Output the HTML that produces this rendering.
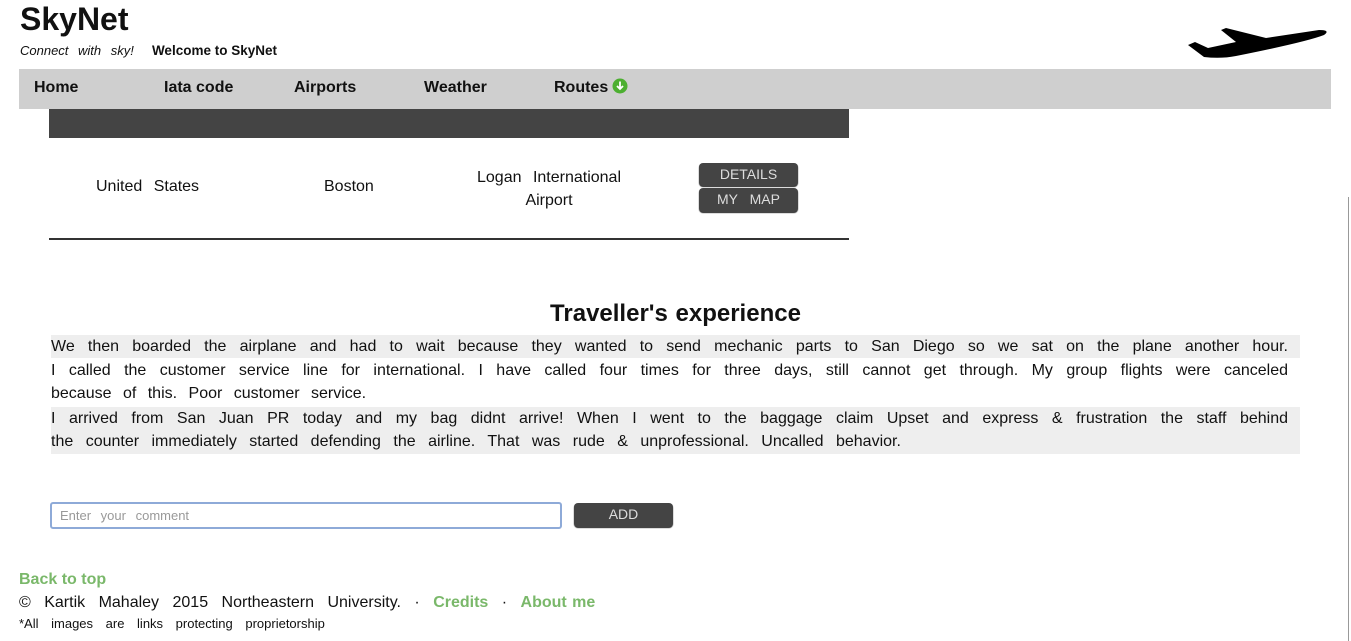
<!DOCTYPE html>
<html><head><meta charset="utf-8"><style>
body{margin:0;width:1351px;height:641px;overflow:hidden;background:#fff;font-family:"Liberation Sans",Arial,sans-serif;color:#111;position:relative}
.a{position:absolute}
.nav span{position:absolute;top:10px;font-weight:bold;font-size:16px;color:#111}
.btn{position:absolute;background:#444;color:#ddd;border-radius:4px;font-size:14px;text-align:center;box-shadow:0 1px 1px #222}
.p{position:absolute;left:51px;width:1237px;padding-right:12px;font-size:16px;line-height:23px;text-align:justify;text-align-last:justify;word-spacing:7px}
.g{background:#eee}
</style></head><body>
<div class="a" style="left:20px;top:0;font-size:32px;font-weight:bold;line-height:38px">SkyNet</div>
<div class="a" style="left:20px;top:43px;font-size:13px"><i style="word-spacing:6px">Connect with sky!</i>&nbsp;&nbsp;&nbsp;&nbsp; <b style="font-size:13.5px">Welcome to SkyNet</b></div>
<svg class="a" style="left:1186px;top:26px" width="144" height="34" viewBox="0 0 144 34"><path d="M2 19 L9 16 L22 22 L50 16 L35 4 L40 2 L80 12 L133 4 Q145 4 138 9 Q120 16 50 30 Q35 33 18 31 L14 28 Z" fill="#000"/></svg>
<div class="a nav" style="left:19px;top:69px;width:1312px;height:40px;background:#cfcfcf">
<span style="left:15px">Home</span><span style="left:145px">Iata code</span><span style="left:275px">Airports</span><span style="left:405px">Weather</span><span style="left:535px">Routes</span>
<svg class="a" style="left:593px;top:9px" width="16" height="16" viewBox="0 0 16 16"><circle cx="8" cy="8" r="7.5" fill="#4caf30"/><path d="M8 3.5V11M5 8l3 3 3-3" stroke="#fff" stroke-width="1.8" fill="none"/></svg>
</div>
<div class="a" style="left:49px;top:109px;width:800px;height:29px;background:#444"></div>
<div class="a" style="left:96px;top:178px;font-size:16px;word-spacing:7px">United States</div>
<div class="a" style="left:324px;top:178px;font-size:16px">Boston</div>
<div class="a" style="left:450px;top:166px;width:198px;font-size:16px;line-height:23px;text-align:center;word-spacing:7px">Logan International Airport</div>
<div class="btn" style="left:699px;top:163px;width:99px;height:23px;line-height:22px">DETAILS</div>
<div class="btn" style="left:699px;top:188px;width:99px;height:24px;line-height:23px;word-spacing:8px">MY MAP</div>
<div class="a" style="left:49px;top:238px;width:800px;height:2px;background:#333"></div>
<div class="a" style="left:0;width:1351px;top:300px;text-align:center;font-size:24px;font-weight:bold;word-spacing:1px">Traveller's experience</div>
<div class="p g" style="top:335px">We then boarded the airplane and had to wait because they wanted to send mechanic parts to San Diego so we sat on the plane another hour.</div>
<div class="p" style="top:359px;text-align-last:left">I called the customer service line for international. I have called four times for three days, still cannot get through. My group flights were canceled because of this. Poor customer service.</div>
<div class="p g" style="top:407px;text-align-last:left;height:47px;word-spacing:8px">I arrived from San Juan PR today and my bag didnt arrive! When I went to the baggage claim Upset and express &amp; frustration the staff behind the counter immediately started defending the airline. That was rude &amp; unprofessional. Uncalled behavior.</div>
<div class="a" style="left:50px;top:502px;width:500px;height:23px;border:2px solid #8eaad8;border-radius:3px;font-size:13px;color:#999;line-height:23px;padding-left:8px;word-spacing:6px">Enter your comment</div>
<div class="btn" style="left:574px;top:503px;width:99px;height:24px;line-height:23px">ADD</div>
<div class="a" style="left:19px;top:571px;font-size:16px;font-weight:bold;color:#7ab86a">Back to top</div>
<div class="a" style="left:19px;top:594px;font-size:16px;word-spacing:9px">© Kartik Mahaley 2015 Northeastern University. · <b style="color:#7ab86a;word-spacing:1px">Credits</b> · <b style="color:#7ab86a;word-spacing:1px">About me</b></div>
<div class="a" style="left:19px;top:616px;font-size:13px;word-spacing:9px">*All images are links protecting proprietorship</div>
<div class="a" style="left:1348px;top:197px;width:1px;height:444px;background:#999"></div>
</body></html>
